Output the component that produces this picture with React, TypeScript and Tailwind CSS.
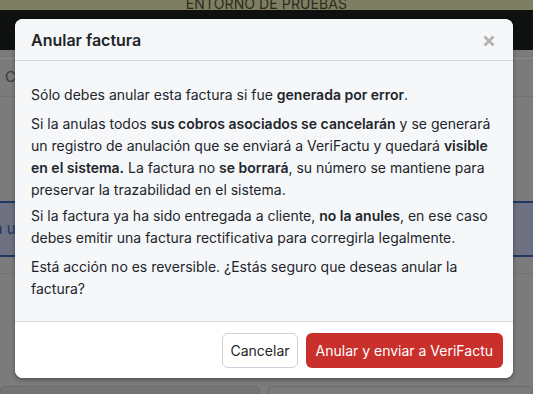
import React from "react";

export default function App() {
  return (
    <div
      className="relative w-[533px] h-[394px] overflow-hidden bg-[#7b7b7b]"
      style={{ fontFamily: "Inter, 'Noto Sans', sans-serif" }}
    >
      {/* background page (already dimmed by overlay) */}
      <div className="flex flex-col">
        <div className="h-[10px] bg-[#7e7f62] flex justify-center items-end overflow-hidden">
          <span className="text-[14px] leading-none text-[#2a2a1c] tracking-[0.1px] translate-y-[1px]">ENTORNO DE PRUEBAS</span>
        </div>
        <div className="h-[40px] bg-[#0f1111]" />
        <div className="h-[8px]" />
        <div className="h-px bg-[#8c8c8c]" />
        <div className="h-[37px] flex items-center px-[5px] text-[15px] text-[#3a3a3a]">C</div>
        <div className="h-px bg-[#727272]" />
        <div className="h-[104px]" />
        <div className="h-[56px] bg-[#6c7080] border-y-2 border-[#1d3766] flex items-center text-[15px] text-[#1d3766] -ml-[6px]">a u</div>
        <div className="h-[16px]" />
        <div className="h-px bg-[#727272]" />
        <div className="h-[112px]" />
        <div className="flex gap-[8px]">
          <div className="w-[260px] h-[20px] rounded-t-[5px] border border-[#6a6a6a] bg-[#747474]" />
          <div className="flex-1 h-[20px] rounded-t-[5px] border border-[#6a6a6a] bg-[#7b7b7b]" />
        </div>
      </div>

      {/* modal */}
      <div className="absolute left-[15px] top-[19px] w-[498px] h-[359px] rounded-[8px] bg-white overflow-hidden shadow-[0_2px_4px_rgba(0,0,0,0.35)] flex flex-col">
        <div className="h-[42px] bg-[#f6f7f9] border-b border-[#d3d7de] flex items-center justify-between pl-[16px] pr-[18px]">
          <h2 className="text-[16px] font-semibold text-[#212529]">Anular factura</h2>
          <svg width="12" height="12" viewBox="0 0 12 12" className="mt-[2px]">
            <path d="M1.5 1.5 L10.5 10.5 M10.5 1.5 L1.5 10.5" stroke="#b3b3b3" strokeWidth="2.8" strokeLinecap="butt" />
          </svg>
        </div>
        <div className="flex-1 bg-[#f6f7f9] border-b border-[#d3d7de] pl-[16px] pr-[16px] pt-[23px] text-[14px] leading-[22px] text-[#212529]">
          <p className="mb-[7px]">
            Sólo debes anular esta factura si fue <b className="font-semibold">generada por error</b>.
          </p>
          <p className="mb-[4px]">
            Si la anulas todos <b className="font-semibold">sus cobros asociados se cancelarán</b> y se generará un registro de anulación que se enviará a VeriFactu y quedará <b className="font-semibold">visible en el sistema.</b> La factura no <b className="font-semibold">se borrará</b>, su número se mantiene para preservar la trazabilidad en el sistema.
          </p>
          <p className="mb-[7px]">
            Si la factura ya ha sido entregada a cliente, <b className="font-semibold">no la anules</b>, en ese caso debes emitir una factura rectificativa para corregirla legalmente.
          </p>
          <p>Está acción no es reversible. ¿Estás seguro que deseas anular la factura?</p>
        </div>
        <div className="h-[56px] bg-white flex items-center justify-end gap-[8px] pr-[10px]">
          <button className="h-[35px] px-[7px] rounded-[6px] border border-[#c9d1dd] bg-white text-[14px] text-[#212529]">
            Cancelar
          </button>
          <button className="h-[35px] px-[10px] rounded-[6px] bg-[#c9302c] text-[14px] text-white">
            Anular y enviar a VeriFactu
          </button>
        </div>
      </div>
    </div>
  );
}
